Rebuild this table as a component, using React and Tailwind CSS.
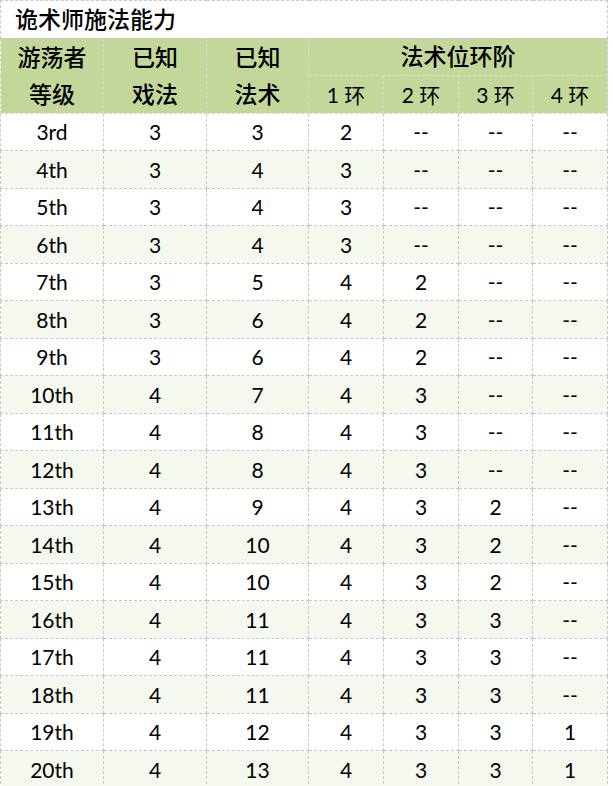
import React from "react";

const rows = [
  ["3rd", 3, 3, 2, "--", "--", "--"],
  ["4th", 3, 4, 3, "--", "--", "--"],
  ["5th", 3, 4, 3, "--", "--", "--"],
  ["6th", 3, 4, 3, "--", "--", "--"],
  ["7th", 3, 5, 4, 2, "--", "--"],
  ["8th", 3, 6, 4, 2, "--", "--"],
  ["9th", 3, 6, 4, 2, "--", "--"],
  ["10th", 4, 7, 4, 3, "--", "--"],
  ["11th", 4, 8, 4, 3, "--", "--"],
  ["12th", 4, 8, 4, 3, "--", "--"],
  ["13th", 4, 9, 4, 3, 2, "--"],
  ["14th", 4, 10, 4, 3, 2, "--"],
  ["15th", 4, 10, 4, 3, 2, "--"],
  ["16th", 4, 11, 4, 3, 3, "--"],
  ["17th", 4, 11, 4, 3, 3, "--"],
  ["18th", 4, 11, 4, 3, 3, "--"],
  ["19th", 4, 12, 4, 3, 3, 1],
  ["20th", 4, 13, 4, 3, 3, 1],
];

const cell = "border border-dashed border-[#c8c8c8] p-0 text-center align-middle";
const head = "border border-dashed border-[#d6dcc6] p-0 text-center align-middle font-medium";

export default function App() {
  return (
    <div
      className="min-h-screen bg-white text-black"
      style={{ fontFamily: "Lato, 'Noto Sans CJK SC', sans-serif" }}
    >
      <table className="table-fixed border-collapse w-[607px]">
        <colgroup>
          <col className="w-[103px]" />
          <col className="w-[103px]" />
          <col className="w-[102px]" />
          <col className="w-[75px]" />
          <col className="w-[75px]" />
          <col className="w-[74px]" />
          <col className="w-[75px]" />
        </colgroup>
        <thead>
          <tr className="h-[37.5px]">
            <th
              colSpan={7}
              className={`${cell} text-left pl-[14px] text-[23px] font-medium leading-none`}
            >
              诡术师施法能力
            </th>
          </tr>
          <tr className="h-[37.5px] bg-[#c4d79b] text-[23px] leading-none">
            <th rowSpan={2} className={head}>
              <div className="leading-[37px]">游荡者</div>
              <div className="leading-[37px]">等级</div>
            </th>
            <th rowSpan={2} className={head}>
              <div className="leading-[37px]">已知</div>
              <div className="leading-[37px]">戏法</div>
            </th>
            <th rowSpan={2} className={head}>
              <div className="leading-[37px]">已知</div>
              <div className="leading-[37px]">法术</div>
            </th>
            <th colSpan={4} className={head}>
              法术位环阶
            </th>
          </tr>
          <tr className="h-[37.5px] bg-[#c4d79b] text-[21px] leading-none">
            <th className={`${head} font-normal`}>1 环</th>
            <th className={`${head} font-normal`}>2 环</th>
            <th className={`${head} font-normal`}>3 环</th>
            <th className={`${head} font-normal`}>4 环</th>
          </tr>
        </thead>
        <tbody className="text-[21px] leading-none">
          {rows.map((r, i) => (
            <tr
              key={r[0]}
              className={`h-[37.5px] ${i % 2 === 1 ? "bg-[#f5f8ee]" : "bg-white"}`}
            >
              {r.map((v, j) => (
                <td key={j} className={cell}>
                  {v}
                </td>
              ))}
            </tr>
          ))}
        </tbody>
      </table>
    </div>
  );
}
